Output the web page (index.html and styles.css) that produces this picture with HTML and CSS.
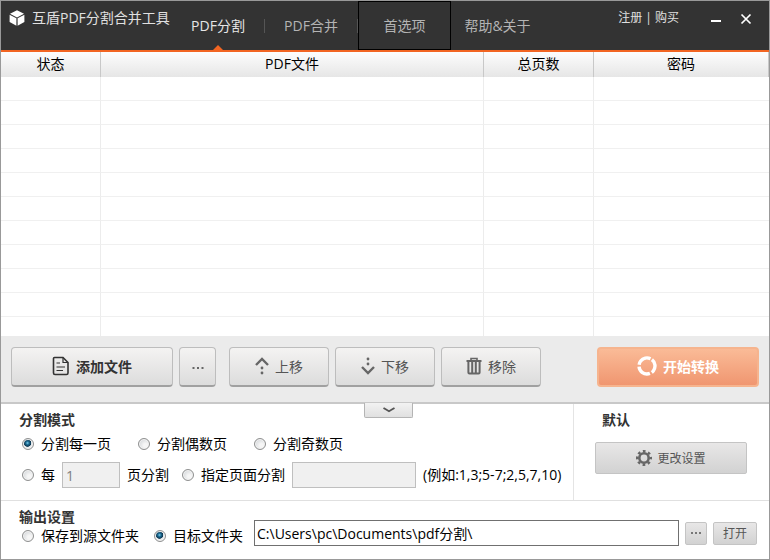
FILE: index.html
```html
<!DOCTYPE html>
<html lang="zh-CN">
<head>
  <meta charset="UTF-8">
  <title>互盾PDF分割合并工具</title>
  <link rel="stylesheet" href="styles.css">
</head>
<body>
  <div class="window">
    <header class="titlebar">
      <div class="brand">
        <svg class="logo" viewBox="0 0 16 16" width="16" height="16">
          <path d="M8 0.3L15 3.8L8 7.4L1 3.8Z" fill="#fff"/>
          <path d="M0.6 4.7L7.4 8.2V15.7L0.6 12Z" fill="#fff"/>
          <path d="M15.4 4.7L8.6 8.2V15.7L15.4 12Z" fill="#fff"/>
        </svg>
        <span>互盾PDF分割合并工具</span>
      </div>
      <nav class="tabs">
        <button class="tab active">PDF分割</button>
        <button class="tab">PDF合并</button>
        <button class="tab focused">首选项</button>
        <button class="tab help">帮助&amp;关于</button>
      </nav>
      <div class="account"><a href="#">注册</a> | <a href="#">购买</a></div>
      <div class="controls">
        <button class="control" aria-label="最小化">
          <svg viewBox="0 0 12 12" width="12" height="12"><path d="M1 8H11" stroke="#fff" stroke-width="2"/></svg>
        </button>
        <button class="control" aria-label="关闭">
          <svg viewBox="0 0 12 12" width="12" height="12"><path d="M1.5 1.5L10.5 10.5M10.5 1.5L1.5 10.5" stroke="#fff" stroke-width="1.7"/></svg>
        </button>
      </div>
    </header>

    <div class="file-list">
      <table>
        <thead>
          <tr>
            <th class="col-state">状态</th>
            <th>PDF文件</th>
            <th class="col-pages">总页数</th>
            <th class="col-password">密码</th>
          </tr>
        </thead>
        <tbody>
          <tr><td></td><td></td><td></td><td></td></tr>
          <tr><td></td><td></td><td></td><td></td></tr>
          <tr><td></td><td></td><td></td><td></td></tr>
          <tr><td></td><td></td><td></td><td></td></tr>
          <tr><td></td><td></td><td></td><td></td></tr>
          <tr><td></td><td></td><td></td><td></td></tr>
          <tr><td></td><td></td><td></td><td></td></tr>
          <tr><td></td><td></td><td></td><td></td></tr>
          <tr><td></td><td></td><td></td><td></td></tr>
          <tr><td></td><td></td><td></td><td></td></tr>
          <tr><td></td><td></td><td></td><td></td></tr>
        </tbody>
      </table>
    </div>

    <div class="toolbar">
      <div class="group">
        <button class="btn btn-wide">
          <svg viewBox="0 0 18 20" width="18" height="20" fill="none" stroke="#333" stroke-width="1.6">
            <path d="M2.5 1.5H11L16 6.5V17Q16 18.5 14.5 18.5H3Q1.5 18.5 1.5 17V2.5Q1.5 1.5 2.5 1.5Z"/>
            <path d="M11 1.5V6.5H16M4.5 7H8M4.5 11H13M4.5 14.5H11" stroke-width="1.2"/>
          </svg>
          <span>添加文件</span>
        </button>
        <button class="btn btn-dots" aria-label="更多">
          <svg viewBox="0 0 12 8" width="12" height="8" fill="#666"><path d="M0.5 5h2v2h-2zM5 5h2v2H5zM9.5 5h2v2h-2z"/></svg>
        </button>
      </div>
      <div class="group">
        <button class="btn">
          <svg viewBox="0 0 14 18" width="14" height="18">
            <path d="M1 8L7 2L13 8" fill="none" stroke="#666" stroke-width="2.4"/>
            <circle cx="7" cy="11" r="1.4" fill="#666"/><circle cx="7" cy="16" r="1.4" fill="#666"/>
          </svg>
          <span>上移</span>
        </button>
        <button class="btn">
          <svg viewBox="0 0 14 18" width="14" height="18">
            <path d="M1 10L7 16L13 10" fill="none" stroke="#666" stroke-width="2.4"/>
            <circle cx="7" cy="2" r="1.4" fill="#666"/><circle cx="7" cy="7" r="1.4" fill="#666"/>
          </svg>
          <span>下移</span>
        </button>
        <button class="btn">
          <svg viewBox="0 0 16 18" width="16" height="18" fill="none" stroke="#666">
            <path d="M0.5 4H15.5" stroke-width="2"/>
            <path d="M5 3.5V1.5H11V3.5" stroke-width="1.6"/>
            <path d="M2.4 4V15.5Q2.4 16.5 3.4 16.5H12.6Q13.6 16.5 13.6 15.5V4" stroke-width="2"/>
            <path d="M6.2 5V16M9.8 5V16" stroke-width="2"/>
          </svg>
          <span>移除</span>
        </button>
      </div>
      <button class="btn btn-wide btn-start">
        <svg viewBox="0 0 20 20" width="20" height="20">
          <circle cx="10" cy="10" r="8" fill="none" stroke="#fff" stroke-width="3.4" stroke-dasharray="14.75 2" transform="rotate(-52 10 10)"/>
        </svg>
        <span>开始转换</span>
      </button>
    </div>

    <div class="settings">
      <button class="collapse" aria-label="收起">
        <svg viewBox="0 0 12 6" width="12" height="6"><path d="M0.5 1Q3 2.6 6 4.2Q9 2.6 11.5 1" fill="none" stroke="#555" stroke-width="1.8"/></svg>
      </button>
      <section class="mode">
        <h3>分割模式</h3>
        <div class="row row-simple">
          <label class="option"><input type="radio" name="mode" checked>分割每一页</label>
          <label class="option"><input type="radio" name="mode">分割偶数页</label>
          <label class="option"><input type="radio" name="mode">分割奇数页</label>
        </div>
        <div class="row row-custom">
          <div class="field">
            <label class="option"><input type="radio" name="mode">每</label>
            <input type="text" class="box every" id="every" value="1" disabled>
            <label for="every">页分割</label>
          </div>
          <div class="field">
            <label class="option"><input type="radio" name="mode">指定页面分割</label>
            <input type="text" class="box pages" id="pages" disabled>
            <label for="pages">(例如:1,3;5-7;2,5,7,10)</label>
          </div>
        </div>
      </section>
      <section class="defaults">
        <h3>默认</h3>
        <button class="btn-flat btn-change">
          <svg viewBox="0 0 16 16" width="16" height="16">
            <circle cx="8" cy="8" r="4.7" fill="none" stroke="#666" stroke-width="2.6"/>
            <circle cx="8" cy="8" r="6.8" fill="none" stroke="#666" stroke-width="2.4" stroke-dasharray="2.7 2.64" stroke-dashoffset="1.35"/>
          </svg>
          <span>更改设置</span>
        </button>
      </section>
    </div>

    <div class="output">
      <div class="target">
        <h3>输出设置</h3>
        <div class="row row-output">
          <label class="option"><input type="radio" name="target">保存到源文件夹</label>
          <label class="option"><input type="radio" name="target" id="folder" checked>目标文件夹</label>
        </div>
      </div>
      <div class="path-row">
        <input type="text" class="path" aria-label="目标文件夹" value="C:\Users\pc\Documents\pdf分割\">
        <button class="btn-flat btn-browse" aria-label="浏览">
          <svg viewBox="0 0 10 2" width="10" height="2" fill="#777"><path d="M0 0h2v2H0zM4 0h2v2H4zM8 0h2v2H8z"/></svg>
        </button>
        <button class="btn-flat btn-open">打开</button>
      </div>
    </div>
  </div>
</body>
</html>
```

FILE: styles.css
```css
* {
  box-sizing: border-box;
}

body {
  margin: 0;
  font-family: "Open Sans", "Noto Sans CJK SC", sans-serif;
  font-size: 14px;
  line-height: 20px;
  color: #000;
  background: #fff;
}

button, input {
  font-family: inherit;
  font-size: 14px;
  margin: 0;
}

button {
  padding: 0;
  cursor: pointer;
}

svg {
  display: block;
  flex: none;
}

h3 {
  margin: 0;
  font-size: 14px;
  line-height: 18px;
  color: #333;
}

.window {
  display: flex;
  flex-direction: column;
  height: 100vh;
  min-height: 400px;
  border: 1px solid #999;
}

/* title bar */
.titlebar {
  display: flex;
  flex: none;
  align-items: flex-start;
  background: #333;
  border-bottom: 2px solid #f26522;
  color: #e0e0e0;
}

.brand {
  display: flex;
  align-items: center;
  gap: 7px;
  width: 171px;
  padding: 7px 0 0 8px;
  white-space: nowrap;
}

.tabs {
  display: flex;
}

.tab {
  position: relative;
  width: 93px;
  height: 49px;
  padding-bottom: 2px;
  border: 0;
  background: none;
  color: #b4b4b4;
  border-right: 1px solid transparent;
  border-image: linear-gradient(transparent 18px, #555 18px, #555 32px, transparent 32px) 1;
  white-space: nowrap;
}

.tab.active {
  color: #e6e6e6;
}

.tab.active::after {
  content: "";
  position: absolute;
  left: 50%;
  bottom: 0;
  margin-left: -5px;
  border: 5px solid transparent;
  border-top: 0;
  border-bottom-color: #f26522;
}

.tab.focused {
  border: 1px solid #000;
  border-image: none;
}

.tab.help {
  border: 0;
}

.account {
  margin-left: auto;
  padding-top: 7px;
  font-size: 12px;
}

.account a {
  color: inherit;
  text-decoration: none;
}

.controls {
  display: flex;
  gap: 6px;
  padding: 6px 11px 0 25px;
}

.control {
  display: flex;
  align-items: center;
  justify-content: center;
  width: 24px;
  height: 24px;
  border: 0;
  background: none;
}

/* file list */
.file-list {
  flex: 1;
  overflow: hidden;
}

table {
  width: 100%;
  table-layout: fixed;
  border-collapse: separate;
  border-spacing: 0;
}

th {
  height: 25px;
  padding: 0 0 2px;
  font-weight: normal;
  line-height: 22px;
  background: linear-gradient(#fdfdfd, #e6e6e6);
  border-right: 1px solid #c8c8c8;
}

td {
  height: 24px;
  padding: 0;
  border-right: 1px solid #ececec;
  border-bottom: 1px solid #f0f0f0;
}

td:last-child {
  border-right: 0;
}

.col-state {
  width: 100px;
}

.col-pages {
  width: 110px;
}

.col-password {
  width: 175px;
}

/* toolbar */
.toolbar {
  display: flex;
  flex: none;
  align-items: flex-start;
  gap: 13px;
  padding: 11px 10px 15px;
  background: #ebebeb;
  border-bottom: 2px solid #c8c8c8;
}

.group {
  display: flex;
  gap: 6px;
}

.btn {
  display: flex;
  align-items: center;
  justify-content: center;
  gap: 6px;
  width: 100px;
  height: 40px;
  padding-bottom: 2px;
  border: 1px solid #bdbdbd;
  border-bottom: 2px solid #a0a0a0;
  border-radius: 4px;
  background: linear-gradient(#f4f3f2, #dcdcdc);
  color: #555;
}

.btn-wide {
  width: 162px;
  color: #333;
  font-weight: bold;
}

.btn-dots {
  width: 37px;
}

.btn-start {
  margin-left: auto;
  border: 2px solid #f6b48e;
  background: linear-gradient(#fabb97, #f09670);
  color: #fff;
}

/* split settings */
.settings {
  position: relative;
  display: flex;
  flex: none;
  border-bottom: 1px solid #e0e0e0;
}

.mode {
  flex: 1;
  padding: 7px 0 12px 18px;
  border-right: 1px solid #e4e4e4;
}

.defaults {
  width: 195px;
  padding: 7px 22px 0 21px;
}

.defaults h3 {
  padding-left: 7px;
}

.collapse {
  position: absolute;
  left: 363px;
  top: -1px;
  display: flex;
  align-items: center;
  justify-content: center;
  width: 49px;
  height: 15px;
  border: 1px solid #b4b4b4;
  border-top: 0;
  border-radius: 0 0 2px 2px;
  background: linear-gradient(#f2f2f2, #e0e0e0);
}

.row {
  display: flex;
  align-items: center;
  padding-left: 3px;
  white-space: nowrap;
}

.row-simple {
  gap: 27px;
  height: 29px;
  margin-bottom: 4px;
}

.row-custom {
  gap: 13px;
  height: 26px;
}

.row-output {
  gap: 15px;
  height: 20px;
}

.field {
  display: flex;
  align-items: center;
  gap: 7px;
}

.option {
  display: flex;
  align-items: center;
  gap: 7px;
}

input[type="radio"] {
  appearance: none;
  flex: none;
  width: 12px;
  height: 12px;
  border: 1px solid #8e8f8f;
  border-radius: 50%;
  background: radial-gradient(circle at 65% 65%, #f6f6f6 20%, #c8ccd0 100%);
  box-shadow: inset 0 0 0 1px #f4f4f4;
}

input[type="radio"]:checked {
  background: radial-gradient(circle at 45% 40%, #7fd0ee 0, #1c6c94 20%, #0d3650 42%, #e8eaec 50%);
}

.box {
  height: 26px;
  padding: 0 3px;
  border: 1px solid #bfbfbf;
  background: #f0f0f0;
  color: #808080;
}

.every {
  width: 58px;
}

.pages {
  width: 124px;
}

.btn-flat {
  display: flex;
  align-items: center;
  justify-content: center;
  gap: 5px;
  border: 1px solid #c4c4c4;
  border-radius: 2px;
  background: linear-gradient(#e8e7e7, #d2d2d2);
  color: #555;
}

.btn-change {
  width: 100%;
  height: 32px;
  margin-top: 13px;
  font-size: 12px;
}

/* output settings */
.output {
  display: flex;
  flex: none;
  align-items: flex-end;
  gap: 11px;
  padding: 7px 12px 13px 18px;
}

.path-row {
  display: flex;
  flex: 1;
  align-items: center;
  gap: 6px;
}

.path {
  flex: 1;
  min-width: 0;
  height: 26px;
  padding: 0 2px;
  border: 1px solid #707070;
}

.btn-browse {
  width: 22px;
  height: 23px;
}

.btn-open {
  width: 44px;
  height: 23px;
  font-size: 12px;
}
```
